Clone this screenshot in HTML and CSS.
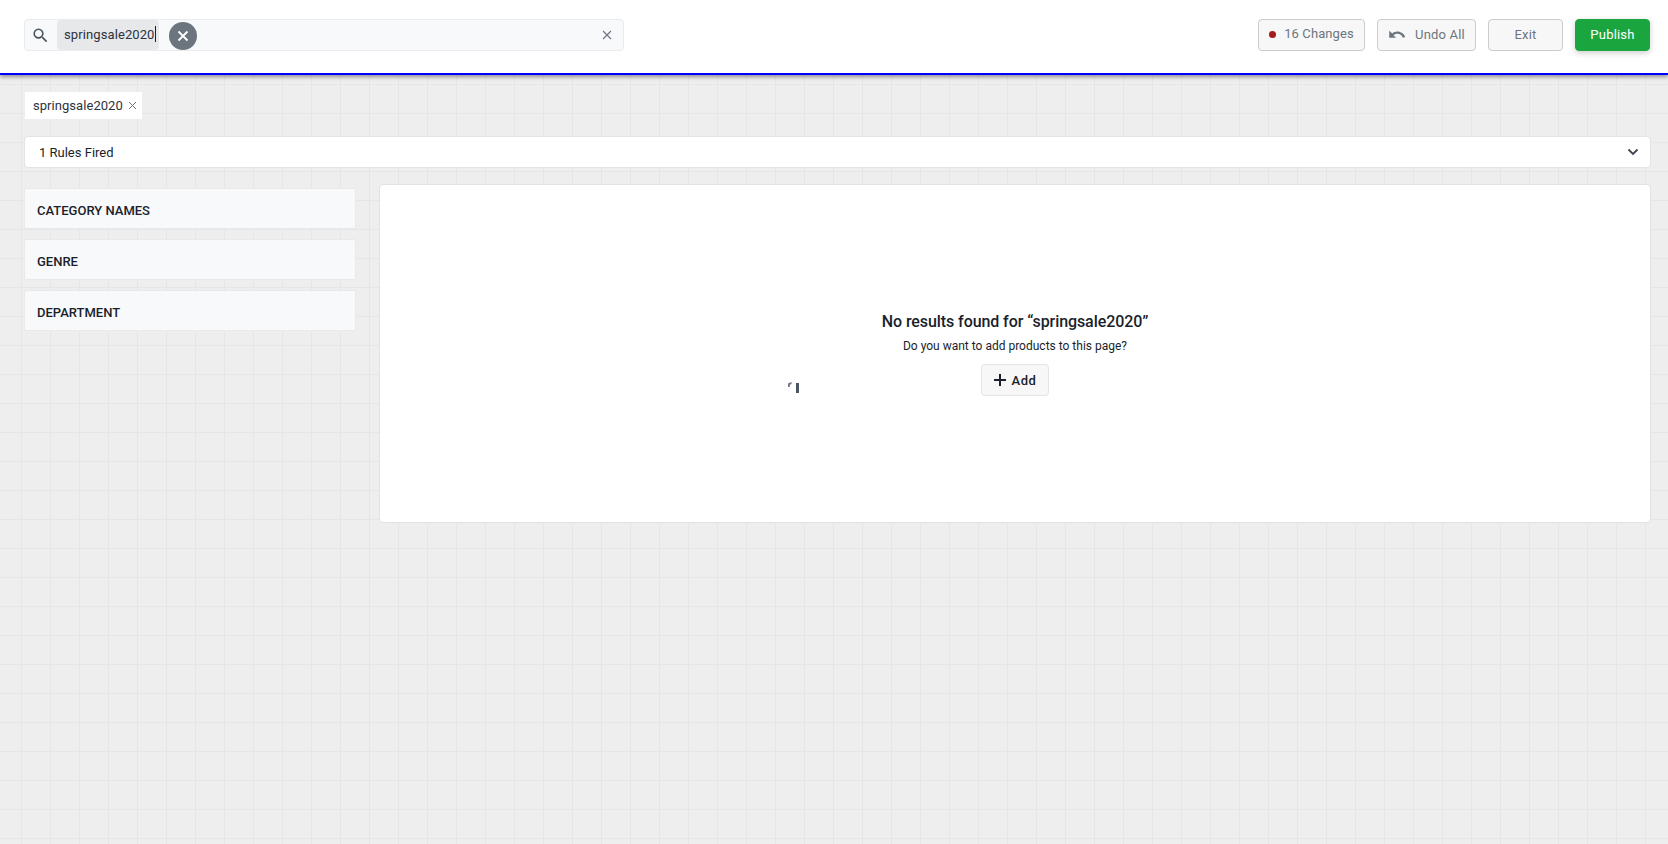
FILE: index.html
```html
<!DOCTYPE html>
<html lang="en">
<head>
    <meta charset="UTF-8">
    <meta name="viewport" content="width=device-width, initial-scale=1.0">
    <title>Search Merchandising</title>
    <link rel="stylesheet" href="styles.css">
</head>
<body>
    <div class="topbar">
        <div class="search-box">
            <svg class="search-icon" width="19" height="19" viewBox="0 0 24 24"><path d="M15.5 14h-.79l-.28-.27A6.47 6.47 0 0 0 16 9.5 6.5 6.5 0 1 0 9.5 16c1.61 0 3.09-.59 4.23-1.57l.27.28v.79l5 4.99L20.49 19l-4.99-5zm-6 0C7.01 14 5 11.99 5 9.5S7.01 5 9.5 5 14 7.01 14 9.5 11.99 14 9.5 14z"/></svg>
            <div class="search-token">springsale2020<span class="caret"></span></div>
            <div class="token-clear">
                <svg width="14" height="14" viewBox="0 0 14 14"><path d="M2.5 2.5l9 9M11.5 2.5l-9 9"/></svg>
            </div>
            <svg class="search-clear" width="10" height="10" viewBox="0 0 10 10"><path d="M1 1l8 8M9 1l-8 8"/></svg>
        </div>
        <div class="top-actions">
            <button class="btn btn-changes"><span class="red-dot"></span>16 Changes</button>
            <button class="btn btn-undo">
                <svg width="19" height="11" viewBox="0 0 20 12"><path d="M1 2v7.500h7.500L5.600 6.700C6.800 5.800 8.200 5.200 9.800 5.200c2.800 0 5.200 1.800 6.100 4.400l2.600-.8C17.100 5.200 13.700 2.700 9.800 2.700 7.700 2.700 5.800 3.500 4.300 4.800L1 2z"/></svg>
                Undo All
            </button>
            <button class="btn btn-exit">Exit</button>
            <button class="btn btn-publish">Publish</button>
        </div>
    </div>

    <div class="content">
        <div class="tag">springsale2020
            <svg width="9" height="9" viewBox="0 0 9 9"><path d="M1 1l7 7M8 1l-7 7"/></svg>
        </div>

        <div class="rules-bar">
            <span>1 Rules Fired</span>
            <svg width="12" height="8" viewBox="0 0 12 8"><path d="M1.500 1.500L6 6l4.500-4.500"/></svg>
        </div>

        <div class="columns">
            <div class="sidebar">
                <div class="facet">CATEGORY NAMES</div>
                <div class="facet">GENRE</div>
                <div class="facet">DEPARTMENT</div>
            </div>
            <div class="results">
                <h2>No results found for “springsale2020”</h2>
                <p>Do you want to add products to this page?</p>
                <button class="btn-add">
                    <svg width="12" height="12" viewBox="0 0 12 12"><path d="M6 0v12M0 6h12"/></svg>
                    Add
                </button>
                <svg class="spinner" width="11" height="11" viewBox="0 0 11 11"><path d="M0 5V1.500L3.500 0v2L1.800 2.800V5z" fill="#6b7280"/><path d="M8 1h3v10H8z" fill="#4b5563"/></svg>
            </div>
        </div>
    </div>
</body>
</html>
```

FILE: styles.css
```css
* {
    box-sizing: border-box;
}
html, body {
    height: 100%;
}
body {
    margin: 0;
    font-family: Roboto, "Liberation Sans", sans-serif;
    color: #1a1f2b;
    overflow: hidden;
    background-color: #eeeeee;
    background-image:
        linear-gradient(to right, #e6e6e6 1px, transparent 1px),
        linear-gradient(to bottom, #e6e6e6 1px, transparent 1px);
    background-size: 29px 29px;
    background-position: 21px 26px;
}
button {
    font-family: inherit;
}
.topbar {
    height: 75px;
    padding: 19px 18px 0 24px;
    display: flex;
    justify-content: space-between;
    align-items: flex-start;
    background-color: white;
    border-bottom: 2px solid #0000ff;
    box-shadow: 0 2px 4px rgba(0, 0, 0, 0.4);
}
.search-box {
    width: 600px;
    height: 32px;
    display: flex;
    align-items: center;
    background-color: #f8f9fa;
    border: 1px solid #e9ebee;
    border-radius: 4px;
}
.search-icon {
    margin-left: 6px;
    margin-right: 7px;
    fill: #4b5563;
}
.search-token {
    height: 30px;
    width: 102px;
    padding: 0 0 2px 7px;
    display: flex;
    align-items: center;
    background-color: #e7e8ea;
    border-radius: 4px;
    font-size: 13px;
    letter-spacing: 0.1px;
    color: #2c3340;
}
.caret {
    width: 1px;
    height: 16px;
    background-color: #1a1f2b;
}
.token-clear {
    width: 28px;
    height: 28px;
    margin-left: 10px;
    margin-top: 2px;
    display: flex;
    align-items: center;
    justify-content: center;
    border-radius: 50%;
    background-color: #6c757d;
}
.token-clear path {
    stroke: white;
    stroke-width: 1.8;
    fill: none;
}
.search-clear {
    margin-left: auto;
    margin-right: 11px;
}
.search-clear path {
    stroke: #6b7280;
    stroke-width: 1.1;
    fill: none;
}
.top-actions {
    display: flex;
    gap: 12px;
}
.btn {
    height: 32px;
    display: flex;
    align-items: center;
    justify-content: center;
    background-color: #f7f7f7;
    border: 1px solid #cccccc;
    border-radius: 4px;
    color: #6c757d;
    font-size: 13px;
    font-weight: 400;
    letter-spacing: 0.2px;
    padding: 0 0 1px;
}
.btn-changes {
    width: 107px;
    padding-bottom: 3px;
    letter-spacing: 0.1px;
}
.red-dot {
    width: 7px;
    height: 7px;
    margin-right: 8px;
    margin-top: 1px;
    border-radius: 50%;
    background-color: #a61c1c;
}
.btn-undo {
    width: 99px;
}
.btn-undo svg {
    margin-right: 8px;
    fill: #6c757d;
}
.btn-exit {
    width: 75px;
}
.btn-publish {
    width: 75px;
    background-color: #1aa53f;
    border: 1px solid #1aa53f;
    color: white;
    box-shadow: 0 2px 6px rgba(0, 0, 0, 0.2);
}
.content {
    padding: 17px 17px 0 24px;
}
.tag {
    width: 117px;
    height: 27px;
    margin-left: 1px;
    display: flex;
    align-items: center;
    padding-left: 8px;
    background-color: white;
    font-size: 13px;
    letter-spacing: 0.05px;
    color: #2c3340;
}
.tag svg {
    margin-left: 5px;
}
.tag path {
    stroke: #6b7280;
    stroke-width: 1;
    fill: none;
}
.rules-bar {
    height: 32px;
    margin-top: 17px;
    padding: 0 11px 0 14px;
    display: flex;
    justify-content: space-between;
    align-items: center;
    background-color: white;
    border: 1px solid #e4e4e4;
    border-radius: 4px;
    font-size: 13px;
}
.rules-bar path {
    stroke: #3d4451;
    stroke-width: 1.800;
    fill: none;
}
.columns {
    display: flex;
    align-items: flex-start;
    margin-top: 16px;
}
.sidebar {
    width: 332px;
    margin-top: 4px;
    margin-right: 23px;
    display: flex;
    flex-direction: column;
    gap: 10px;
}
.facet {
    height: 41px;
    padding: 4px 12px 0;
    display: flex;
    align-items: center;
    background-color: #f8f9fa;
    border: 1px solid #e9e9e9;
    border-radius: 2px;
    font-size: 13px;
    font-weight: 500;
}
.results {
    flex: 1;
    height: 339px;
    padding-top: 127px;
    position: relative;
    display: flex;
    flex-direction: column;
    align-items: center;
    background-color: white;
    border: 1px solid #e2e2e2;
    border-radius: 4px;
}
.results h2 {
    margin: 0;
    font-size: 16px;
    line-height: 20px;
    font-weight: 500;
    letter-spacing: -0.08px;
}
.results p {
    margin: 5px 0 0;
    font-size: 12px;
    line-height: 18px;
}
.btn-add {
    width: 68px;
    height: 32px;
    margin-top: 9px;
    display: flex;
    align-items: center;
    justify-content: center;
    gap: 6px;
    background-color: #f7f7f7;
    border: 1px solid #e4e4e4;
    border-radius: 4px;
    font-size: 13px;
    font-weight: 500;
    letter-spacing: 0.5px;
    color: #1a1f2b;
    padding: 0;
}
.btn-add path {
    stroke: #1a1f2b;
    stroke-width: 2;
    fill: none;
}
.spinner {
    position: absolute;
    left: 408px;
    top: 197px;
}
```
